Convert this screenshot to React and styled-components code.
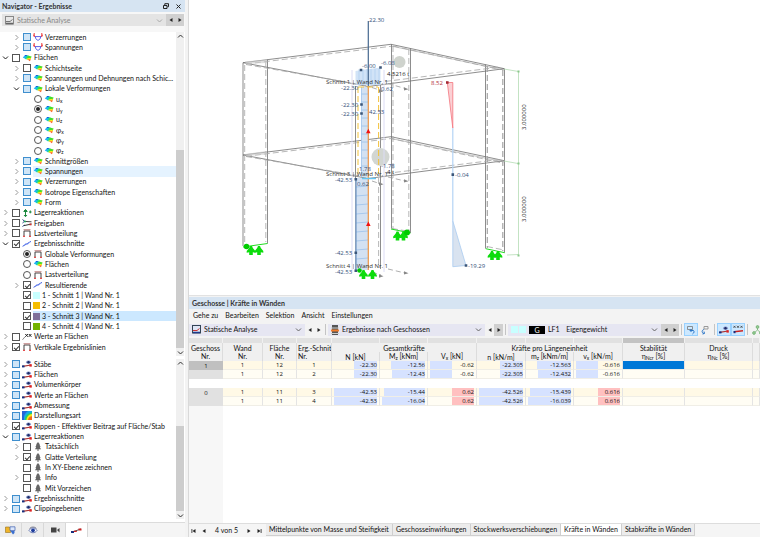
import React from 'react'
import styled, { createGlobalStyle, css } from 'styled-components'

const GlobalStyle = createGlobalStyle`
  *, *::before, *::after {
    box-sizing: border-box;
  }

  body {
    margin: 0;
    background: #f3f3f3;
    color: #111;
    font: 7px/9px Lato, "Open Sans", sans-serif;
  }

  button, select, input {
    font: inherit;
    color: inherit;
    margin: 0;
    padding: 0;
    border: 0;
    border-radius: 0;
    background: none;
  }
`

const Window = styled.div`
  display: flex;
  min-height: 100vh;
`

/* ---------- navigator ---------- */

const Navigator = styled.aside`
  display: flex;
  flex-direction: column;
  flex: 0 0 185px;
  background: #fff;
`

const TitleBar = styled.header`
  display: flex;
  align-items: center;
  gap: 7px;
  height: 12px;
  padding: 0 4px 0 2px;
  background: #d6e4f2;

  h1 {
    flex: 1;
    margin: 0;
    font-size: 7px;
    font-weight: 700;
    color: #333;
  }
`

const PlainButton = styled.button`
  display: flex;
  align-items: center;
  justify-content: center;
`

const NavToolbar = styled.div`
  display: flex;
  align-items: center;
  height: 20px;
  padding: 1px 1px 5px 2px;
  background: #f7f7f7;
`

const Combo = styled.label`
  display: flex;
  align-items: center;
  gap: 3px;
  flex: ${p => p.$width ? `0 0 ${p.$width}px` : '1'};
  height: 12px;
  padding: 0 3px;
  background: ${p => p.$muted ? '#e4e4e4' : '#e6e6f2'};

  select {
    flex: 1;
    min-width: 0;
    appearance: none;
    outline: none;
    opacity: 1;
    color: ${p => p.$muted ? '#888' : 'inherit'};
  }
`

const StepButton = styled(PlainButton)`
  flex: none;
  width: 9px;
  height: 12px;
  background: ${p => p.$filled ? '#d0d0d0' : 'transparent'};
`

const Tree = styled.section`
  display: flex;
  flex: ${p => p.$rows} 0 ${p => p.$after}px;
`

const TreeRows = styled.ul`
  display: flex;
  flex-direction: column;
  flex: 1;
  min-width: 0;
  margin: 0;
  padding: 0 0 ${p => p.$after}px;
  list-style: none;
`

const TreeRow = styled.li`
  display: flex;
  align-items: center;
  flex: 1;
  padding-left: ${p => p.$level * 11}px;
`

const Twisty = styled(PlainButton)`
  width: 12px;
  height: 10px;
  padding-right: 1px;
`

const TwistySpace = styled.span`
  width: 12px;
`

const boxFill = css`
  border-color: #3f8fce;
  background: #cfe5f7;
`

const Check = styled.input`
  display: grid;
  place-items: center;
  appearance: none;
  width: 8px;
  height: 8px;
  margin-right: 2px;
  border: 1px solid #555;
  border-radius: ${p => p.type === 'radio' ? '50%' : '0'};
  background: #fff;
  ${p => p.$partial && boxFill}

  &:checked::after {
    content: '';
    ${p => p.type === 'radio' ? css`
      width: 4px;
      height: 4px;
      border-radius: 50%;
      background: #222;
    ` : css`
      width: 5px;
      height: 3px;
      border: solid #333;
      border-width: 0 0 1px 1px;
      transform: rotate(-48deg);
    `}
  }
`

const RowLabel = styled.label`
  display: flex;
  align-items: center;
  gap: 2px;
  flex: 1;
  min-width: 0;
  height: 100%;
  overflow: hidden;
  white-space: nowrap;
  background: ${p => p.$tone || 'transparent'};

  svg {
    flex: none;
  }

  sub {
    font-size: 5px;
    line-height: 1;
    vertical-align: -1px;
  }
`

const Swatch = styled.span`
  width: 7px;
  height: 7px;
  background: ${p => p.$color};
`

const Scroll = styled.div`
  display: flex;
  flex-direction: column;
  width: 8px;
  margin: 0 1px 3px 0;
  background: #f0f0f0;
`

const ScrollButton = styled(PlainButton)`
  height: 8px;
`

const Before = styled.span`
  flex: ${p => p.$part};
`

const Thumb = styled.span`
  flex: ${p => p.$part};
  background: #cdcdcd;
`

const NavTabs = styled.nav`
  display: flex;
  height: 15px;
  background: #f5f5f5;
  border-top: 1px solid #dcdcdc;
`

const NavTab = styled(PlainButton)`
  width: 22px;
  border-right: 1px solid #d8d8d8;
  background: ${p => p.$active ? '#fff' : '#ededed'};
`

/* ---------- right side ---------- */

const Main = styled.main`
  display: flex;
  flex-direction: column;
  flex: 1;
  min-width: 0;
  margin-left: 3px;
  border-left: 1px solid #d9d9d9;
`

const Viewport = styled.div`
  flex: none;
  background: #fff;
  border-bottom: 1px solid #e2e2e2;

  svg {
    display: block;
    width: 100%;
  }
`

const Panel = styled.section`
  display: flex;
  flex-direction: column;
  flex: 1;
  margin-top: 1px;
`

const PanelTitle = styled.h2`
  height: 12px;
  margin: 0;
  padding: 0 3px;
  background: #d6e4f2;
  font-size: 7px;
  font-weight: 700;
  line-height: 12px;
  color: #333;
`

const MenuBar = styled.nav`
  display: flex;
  align-items: center;
  gap: 7px;
  height: 13px;
  padding: 0 4px;
`

const Toolbar = styled.div`
  display: flex;
  align-items: center;
  height: 15px;
  margin-bottom: 1px;
  overflow: hidden;
`

const Divider = styled.span`
  flex: none;
  width: 1px;
  height: 11px;
  margin: 0 2px;
  background: #c4c4c4;
`

const ToolButton = styled(PlainButton)`
  flex: none;
  width: 14px;
  height: 13px;
  border: 1px solid ${p => p.$on ? '#99d1ff' : 'transparent'};
  background: ${p => p.$on ? '#cce8ff' : 'transparent'};
`

const CaseTag = styled.span`
  width: 16px;
  background: #000;
  color: #fff;
  line-height: 8px;
  text-align: center;
`

const CaseColors = styled.span`
  display: flex;
  gap: 1px;
`

const TableArea = styled.div`
  flex: 1;
  background: linear-gradient(90deg, #f7f7f7 34px, #fff 34px);
`

const Table = styled.table`
  width: 100%;
  table-layout: fixed;
  border-collapse: separate;
  border-spacing: 0;

  th, td {
    height: 9px;
    padding: 0 2px;
    border-right: 1px solid #e4e4e4;
    font-weight: 400;
    line-height: 8px;
    text-align: center;
    white-space: nowrap;
    overflow: hidden;
  }

  td {
    font: 6px/8px "Open Sans", "Noto Sans", sans-serif;
  }

  thead th {
    background: #f0f0f0;
    border-right-color: #dcdcdc;
  }

  sub {
    font-size: 5px;
    line-height: 1;
    vertical-align: -1px;
  }
`

const StartHead = styled.th`
  && {
    text-align: left;
    padding: 0 0 0 1px;
  }
`

const Grip = styled.td`
  && {
    height: 5px;
    line-height: 5px;
    background: ${p => p.$on ? '#c3c3c3' : '#e1e1e1'};
    border-right: 1px solid #f0f0f0;
  }
`

const StoreyCell = styled.th`
  && {
    background: ${p => p.$on ? '#c0c0c0' : '#e1e1e1'};
    border-right: 0;
    font: 6px/8px "Open Sans", "Noto Sans", sans-serif;
  }
`

const DataRow = styled.tr`
  td {
    background: ${p => p.$soft ? '#fffdf4' : '#fff9e6'};
    border-bottom: 1px solid #f0eee6;
  }
`

const GapRow = styled.tr`
  td {
    border: 0;
    background: #fff;
  }
`

const SelectedCell = styled.td`
  && {
    background: #0078d7;
  }
`

const Meter = styled.span`
  display: grid;
  height: 8px;

  > * {
    grid-area: 1 / 1;
    line-height: 8px;
    text-align: right;
  }
`

const MeterBar = styled.span`
  margin-left: ${p => p.$from}%;
  width: ${p => p.$size}%;
  background: ${p => p.$positive ? '#ffc0c0' : '#d6e2ff'};
`

const SheetBar = styled.footer`
  display: flex;
  height: 14px;
  background: #f5f5f5;
  border-top: 1px solid #ddd;
`

const Pager = styled.div`
  display: flex;
  align-items: center;
  gap: 4px;
  width: 77px;
  padding: 0 4px 0 2px;

  span {
    flex: 1;
    text-align: center;
    white-space: nowrap;
  }
`

const SheetTab = styled(PlainButton)`
  height: 12px;
  padding: 0 3px;
  border-right: 1px solid #cfcfcf;
  border-bottom: 1px solid #cfcfcf;
  background: ${p => p.$active ? '#fff' : '#ececec'};
  white-space: nowrap;
`

/* ---------- icons ---------- */

const Chevron = ({ dir = 'down', color = '#666' }) => {
  const d = {
    down: 'M1 2.5 3.5 5 6 2.5',
    up: 'M1 4.5 3.5 2 6 4.5',
    right: 'M2.5 1 5 3.5 2.5 6'
  }[dir]
  return (
    <svg width="7" height="7" viewBox="0 0 7 7" fill="none" stroke={color} strokeWidth="1">
      <path d={d} />
    </svg>
  )
}

const Arrow = ({ dir, bar }) => (
  <svg width="6" height="6" viewBox="0 0 6 6" fill="#222">
    <g transform={dir === 'left' ? 'translate(6 0) scale(-1 1)' : undefined}>
      <path d="M1.500 1v4l3-2z" />
      {bar && <path d="M4.700 1h.8v4h-.8z" />}
    </g>
  </svg>
)

const RainbowIcon = () => (
  <svg width="10" height="8" viewBox="0 0 10 8">
    <path d="M.8 3.600 3.200 1 5.600 1.600 4 5.200z" fill="#1fb4f5" />
    <path d="M2.600 1.800 3.400.9 5.400 1.300 5 2.600z" fill="#1450e0" />
    <path d="M4.400 1.700 6.400 1.500 6 5.600 3 5z" fill="#17d9a0" />
    <path d="M5.800 1.600 9.600 2.600 8.600 5 5 4.800z" fill="#45dd2c" />
    <path d="M4.400 4.600 9 3.800 8.300 5.800 5 5.800z" fill="#ffe818" />
    <path d="M5.600 5.500 8.700 5.200 8 7.300z" fill="#fb5a1e" />
  </svg>
)

const CurveIcon = () => (
  <svg width="10" height="8" viewBox="0 0 10 8" fill="none">
    <path d="M1.200 0v4M8.800 0v4M0 1.800l2 1.600M10 1.800 8 3.400" stroke="#ee3a3a" />
    <path d="M2 3.600h6M2.200 3.600c.8 4.800 4.800 4.800 5.600 0" stroke="#5c5ce6" />
  </svg>
)

const FrameIcon = () => (
  <svg width="10" height="8" viewBox="0 0 10 8" fill="none">
    <path d="M2 7V2h6v5" stroke="#444" />
    <path d="M1.500.8h7" stroke="#b77" />
    <path d="M1 7.300h2M7 7.300h2" stroke="#d22" />
  </svg>
)

const SectionIcon = () => (
  <svg width="10" height="8" viewBox="0 0 10 8" fill="none">
    <path d="M.6 6.300 9 1.400" stroke="#3154e0" />
    <path d="M2 5.600 3.600 3.600 6 4.200 8 1.800" stroke="#8fa4f5" />
  </svg>
)

const SupportIcon = () => (
  <svg width="10" height="8" viewBox="0 0 10 8" fill="none" stroke="#1d8a3f">
    <path d="M3.500.5v7M1.500 2.500h4M2 6l1.500 1.700L5 6M2 2 3.500.5 5 2M7 3h2.600M8.300 1.500v2.800" />
  </svg>
)

const HingeIcon = () => (
  <svg width="10" height="8" viewBox="0 0 10 8" fill="none">
    <path d="M.5.500 2.500 2.200.5 4M.5 7.500 2.500 6" stroke="#27407f" />
    <path d="M2 2.400 9.500 2.800" stroke="#444" />
    <path d="M2 6.600 9.500 5" stroke="#333" />
    <path d="M7.500 4.500h2v1.800h-2z" fill="#c33" />
    <circle cx="3" cy="2.400" r="1" fill="#2a6" />
  </svg>
)

const ValuesIcon = () => (
  <svg width="10" height="8" viewBox="0 0 10 8" fill="none" stroke="#222">
    <path d="m3.300 1 2.600 2.800m0-2.800L3.300 3.800M6.800 1l2.600 2.800m0-2.800L6.800 3.800" />
    <path d="M.5 6.800 2.800 4" stroke="#888" />
  </svg>
)

const MemberIcon = () => (
  <svg width="10" height="8" viewBox="0 0 10 8">
    <path d="M.7 6.400 9 5" stroke="#a33" strokeWidth="1.200" />
    <rect x="0" y="5.400" width="2.500" height="2" fill="#15307f" />
    <rect x="7.400" y="4.200" width="2.400" height="2.400" fill="#d22" />
    <path d="M3.800 2.200C5 0 8 0 9.200 2.200 8 4.200 5 4.200 3.800 2.200z" fill="#8593c8" />
    <circle cx="6.500" cy="2.300" r="1.200" fill="#1b2a66" />
  </svg>
)

const ContourIcon = () => (
  <svg width="10" height="9" viewBox="0 0 10 9">
    <rect width="10" height="9" fill="#16a8e8" />
    <path d="M0 0h6A9 9 0 0 0 2 9H0z" fill="#2563d8" />
    <path d="M10 1.400A7.800 7.800 0 0 0 2.800 9H10z" fill="#27cf62" />
    <path d="M10 3A6 6 0 0 0 4.400 9H10z" fill="#f5e81b" />
    <path d="M10 5.200A4.400 4.400 0 0 0 6 9h4z" fill="#f4661c" />
  </svg>
)

const TreeIcon = () => (
  <svg width="10" height="9" viewBox="0 0 10 9" fill="#666">
    <path d="M5 0 7 2.600H6.400L7.600 5H6.800L8 7.200H5.500V9h-1V7.200H2L3.200 5h-.8l1.200-2.400H3z" />
  </svg>
)

const ResultIcon = ({ muted }) => (
  <svg width="9" height="9" viewBox="0 0 9 9" fill="none">
    <rect x=".5" y=".5" width="8" height="7.500" fill={muted ? '#e8e8e8' : '#dfe6f5'} stroke={muted ? '#888' : '#345'} />
    <path d="M1 5.500h4l2.500-2" stroke={muted ? '#777' : '#c33'} />
    <path d="M1 7.500h7" stroke={muted ? '#666' : '#1d3a8c'} strokeWidth="1.500" />
  </svg>
)

const StoreyIcon = () => (
  <svg width="8" height="10" viewBox="0 0 8 10">
    <rect x="1" y="0" width="6" height="10" fill="#555" />
    <path d="M0 3h8M0 8.500h8" stroke="#ccc" />
    <path d="M0 5.500h8" stroke="#ee7a2b" strokeWidth="2" />
  </svg>
)

const icons = {
  rainbow: RainbowIcon,
  curve: CurveIcon,
  frame: FrameIcon,
  section: SectionIcon,
  support: SupportIcon,
  hinge: HingeIcon,
  values: ValuesIcon,
  member: MemberIcon,
  contour: ContourIcon,
  tree: TreeIcon
}

/* ---------- data ---------- */

const symbol = (s, i) => <span>{s}<sub>{i}</sub></span>

// level, twisty ('>' closed, 'v' open), box, icon, text, highlight
const resultRows = [
  [1, '>', 'part', 'curve', 'Verzerrungen'],
  [1, '>', 'part', 'curve', 'Spannungen'],
  [0, 'v', 'off', 'rainbow', 'Flächen'],
  [1, '>', 'off', 'rainbow', 'Schichtseite'],
  [1, '>', 'part', 'rainbow', 'Spannungen und Dehnungen nach Schic...'],
  [1, 'v', 'part', 'rainbow', 'Lokale Verformungen'],
  [2, '', 'radio', 'rainbow', symbol('u', 'x')],
  [2, '', 'radioOn', 'rainbow', symbol('u', 'y')],
  [2, '', 'radio', 'rainbow', symbol('u', 'z')],
  [2, '', 'radio', 'rainbow', symbol('φ', 'x')],
  [2, '', 'radio', 'rainbow', symbol('φ', 'y')],
  [2, '', 'radio', 'rainbow', symbol('φ', 'z')],
  [1, '>', 'part', 'rainbow', 'Schnittgrößen'],
  [1, '>', 'part', 'rainbow', 'Spannungen', '#e5f3ff'],
  [1, '>', 'part', 'rainbow', 'Verzerrungen'],
  [1, '>', 'part', 'rainbow', 'Isotrope Eigenschaften'],
  [1, '>', 'part', 'rainbow', 'Form'],
  [0, '>', 'off', 'support', 'Lagerreaktionen'],
  [0, '>', 'off', 'hinge', 'Freigaben'],
  [0, '>', 'off', 'frame', 'Lastverteilung'],
  [0, 'v', 'on', 'section', 'Ergebnisschnitte'],
  [1, '', 'radioOn', 'frame', 'Globale Verformungen'],
  [1, '', 'radio', 'rainbow', 'Flächen'],
  [1, '', 'radio', 'frame', 'Lastverteilung'],
  [1, '>', 'on', 'section', 'Resultierende'],
  [1, '', 'on', '#c8ffff', '1 - Schnitt 1 | Wand Nr. 1'],
  [1, '', 'off', '#f5bd00', '2 - Schnitt 2 | Wand Nr. 1'],
  [1, '', 'on', '#80709a', '3 - Schnitt 3 | Wand Nr. 1', '#cce8ff'],
  [1, '', 'off', '#73b300', '4 - Schnitt 4 | Wand Nr. 1'],
  [0, '>', 'off', 'values', 'Werte an Flächen'],
  [0, '>', 'on', 'frame', 'Vertikale Ergebnislinien']
]

const displayRows = [
  [0, '>', 'part', 'member', 'Stäbe'],
  [0, '>', 'part', 'member', 'Flächen'],
  [0, '>', 'part', 'member', 'Volumenkörper'],
  [0, '>', 'part', 'member', 'Werte an Flächen'],
  [0, '>', 'part', 'member', 'Abmessung'],
  [0, '>', 'part', 'contour', 'Darstellungsart'],
  [0, '>', 'on', 'member', 'Rippen - Effektiver Beitrag auf Fläche/Stab'],
  [0, 'v', 'part', 'member', 'Lagerreaktionen'],
  [1, '>', 'off', 'tree', 'Tatsächlich'],
  [1, '>', 'on', 'tree', 'Glatte Verteilung'],
  [1, '', 'off', 'tree', 'In XY-Ebene zeichnen'],
  [1, '>', 'off', 'tree', 'Info'],
  [1, '', 'off', 'tree', 'Mit Vorzeichen'],
  [0, '>', 'part', 'member', 'Ergebnisschnitte'],
  [0, '>', 'part', 'member', 'Clippingebenen']
]

const columns = [34, 40, 34, 35, 48, 48, 49, 49, 48, 49, 62, 68, null]

// each value: text, bar start %, bar size %
const neg = [0, 50]
const pos = [50, 50]
const storeys = [
  ['1', '1', '12', '1', [['-22.30', 47, 53], ['-12.56', 22, 78], ['-0.62', ...neg], ['-22.305', 47, 53], ['-12.563', 22, 78], ['-0.616', ...neg]]],
  ['', '1', '12', '2', [['-22.30', 47, 53], ['-12.43', 23, 77], ['-0.62', ...neg], ['-22.305', 47, 53], ['-12.432', 23, 77], ['-0.616', ...neg]]],
  null,
  ['0', '1', '11', '3', [['-42.53', 0, 100], ['-15.44', 4, 96], ['0.62', ...pos], ['-42.526', 0, 100], ['-15.439', 4, 96], ['0.616', ...pos]]],
  ['', '1', '11', '4', [['-42.53', 0, 100], ['-16.04', 0, 100], ['0.62', ...pos], ['-42.526', 0, 100], ['-16.039', 0, 100], ['0.616', ...pos]]]
]

const sheets = [
  'Mittelpunkte von Masse und Steifigkeit',
  'Geschosseinwirkungen',
  'Stockwerksverschiebungen',
  'Kräfte in Wänden',
  'Stabkräfte in Wänden'
]

/* ---------- parts ---------- */

const TreeView = ({ name, rows, after, thumb }) => (
  <Tree $rows={rows.length} $after={after}>
    <TreeRows $after={after}>
      {rows.map(([level, twisty, box, icon, text, tone], i) => {
        const id = `${name}-${i}`
        const radio = box.startsWith('radio')
        const Icon = icons[icon]
        return (
          <TreeRow key={id} $level={level}>
            {twisty
              ? (
                <Twisty aria-label="Zweig">
                  <Chevron dir={twisty === 'v' ? 'down' : 'right'} color={twisty === 'v' ? '#222' : '#999'} />
                </Twisty>
              )
              : <TwistySpace />}
            <Check
              id={id}
              type={radio ? 'radio' : 'checkbox'}
              name={radio ? `${name}-group-${level}` : undefined}
              defaultChecked={box === 'on' || box === 'radioOn'}
              $partial={box === 'part'}
            />
            <RowLabel htmlFor={id} $tone={tone}>
              {Icon ? <Icon /> : <Swatch $color={icon} />}
              <span>{text}</span>
            </RowLabel>
          </TreeRow>
        )
      })}
    </TreeRows>
    <Scroll>
      <ScrollButton aria-label="Nach oben"><Chevron dir="up" color="#333" /></ScrollButton>
      <Before $part={thumb[0]} />
      <Thumb $part={thumb[1]} />
      <ScrollButton aria-label="Nach unten"><Chevron color="#333" /></ScrollButton>
    </Scroll>
  </Tree>
)

const Supports = ({ x, y, gap }) => (
  <g fill="#0cdc0c">
    {[x, x + gap].map(cx => (
      <path key={cx} transform={`translate(${cx} ${y})`} d="M-1 0h2l.8 2L4.300 5v1.800L1.800 6.200V9h-3.600V6.200L-4.300 6.800V5L-1.800 2z" />
    ))}
  </g>
)

const steps = (from, to, gap) => {
  const list = []
  for (let y = from; y < to; y += gap) list.push(y)
  return list
}

const SceneText = styled.text`
  font: 6px "Open Sans", "Noto Sans", sans-serif;
  fill: ${p => p.$fill || '#34507a'};
`

const Scene = () => (
  <svg viewBox="189 0 571 295" role="img" aria-label="Gebäudemodell">
    <g fill="none" stroke="#707070" strokeWidth=".8">
      <path d="M243 62.700 391 44.300 504.300 68.700 368 86.500z" />
      <path d="M243 155 391 136.700 504.300 160.700 368 178.500z" />
      <path d="M391 46 504 70M391 138.500 504 162" strokeWidth=".4" />
      <path d="M243 62.700V246M267.500 59.700V243.500" />
      <path d="M391.500 44.300V228.500M410.500 48.500V233" />
      <path d="M485.500 64.500V248.500M504.500 68.700V252.500" />
      <path d="M355.500 86V270M380.500 85V269" />
    </g>
    <g fill="none" stroke="#a5a5a5" strokeWidth=".8" strokeDasharray="6 3">
      <path d="M244.700 65V246M265.800 61V242M246 64 391 46.300M246 64.500 366 85.500" />
      <path d="M393 46V229M408.800 49V231M393 46 500 69.500M385 81.500 500 67" />
      <path d="M487.300 66V248M502.800 70V251" strokeWidth="1.200" />
      <path d="M246 156.300 391 138.500 500 162.500M386 173.500 500 159.500M246 156.500 366 177" />
      <path d="M378.600 178v90M357.300 178v90M392 228.500l18 3M487 246.500l17 3.500" />
    </g>
    <path d="M245 61.500 267 59.500V63L246 64zM245 154 267 151v3.500L246 156z" fill="#c9c9c9" opacity=".6" />
    <circle cx="399.500" cy="62" r="6" fill="#cfd3cd" />
    <circle cx="380.500" cy="157" r="9" fill="#d2d6d2" />

    {/* wall under analysis */}
    <path d="M352 70V272M384 70V272" stroke="#dcdcf5" fill="none" />
    <path d="M355.500 71 361 70 380.500 67.500V85h-25z" fill="#c6dcf5" opacity=".8" />
    <path d="M361.500 87H368v90h-6.500zM355.500 178H368v92h-12.500z" fill="#d3e1f2" />
    <g stroke="#9dc1ea" strokeWidth=".8">
      {steps(94, 176, 8).map(y => <path key={y} d={`M361.500 ${y}h6.500`} />)}
      {steps(187, 268, 9).map(y => <path key={y} d={`M356 ${y}l12-1`} />)}
      {steps(359, 381, 4).map(x => <path key={x} d={`M${x} 69v16`} strokeWidth=".5" />)}
      <path d="M361.500 87v90" />
    </g>
    <path d="M356 178v92" stroke="#5b87bd" />
    <path d="M368.300 21V86" stroke="#46688f" strokeWidth="1.200" />
    <path d="M368.300 86v184" stroke="#eb9443" strokeWidth="1.200" />
    <path d="M358 87V176M378.600 87V176M358 87h20" fill="none" stroke="#f3c23c" strokeDasharray="6 3" />
    <path d="M366 133.300h4.600l-2.300-4.600zM366 226h4.600l-2.300-4.600z" fill="#f01212" />
    <path d="M362 178.500h14" stroke="#66c4f0" strokeWidth="1.500" />
    <g fill="none" stroke="#999" strokeWidth=".8" strokeDasharray="5 3">
      <path d="M372 87.500l9 3M388 83.500l17 5M372 181l9 3M388 177l17 4M372 272l9 3M388 269l17 4" />
    </g>
    <path d="M379 89.300l4.500 2-4.500 1.500zM404 87.300l4.500 2-4.500 1.200zM379 182.300l4.500 2-4.500 1.500zM404 179.300l4.500 2-4.500 1.200zM379 274.300l4.500 2-4.500 1.500zM404 271.300l4.500 2-4.500 1.200z" fill="#888" />

    {/* supports */}
    <g stroke="#22dd22" fill="none">
      <path d="M243 247l24.500-3.500M391 229l19.500 4M485.700 248.700l19 4" />
    </g>
    <Supports x={251} y={246} gap={8} />
    <Supports x={363.5} y={270} gap={9} />
    <Supports x={397.5} y={231.5} gap={6} />
    <Supports x={492} y={251} gap={6} />
    <circle cx="246.500" cy="246.500" r="2.800" fill="#0c0" />
    <circle cx="407" cy="232.500" r="3" fill="#0c0" />
    <circle cx="359.500" cy="270.500" r="2.300" fill="#0c0" />

    {/* result diagram */}
    <path d="M447.300 82.500h5.500V128z" fill="#fbd0d4" stroke="#f4757e" strokeWidth=".8" />
    <path d="M452.800 128v93" stroke="#b5d4f5" strokeWidth="1.200" />
    <path d="M452.800 221 466 265.500 452.800 266.700z" fill="#d9e3f0" stroke="#a9cbf0" strokeWidth=".8" />

    {/* dimensions */}
    <path d="M504 69l14.500 2.500V255.500M504 161l14.500 2.600M507 255l11.500-.5" fill="none" stroke="#b4dcb4" strokeWidth=".8" />
    <path d="M517.500 70.500h2v2h-2zM517.500 162.600h2v2h-2zM517.500 254.500h2v2h-2z" fill="#8ac88a" />

    <g fill="#3b5679">
      <path d="M359.700 68.700h2.600v2.600h-2.600zM379.200 66.200h2.600v2.600h-2.600zM360.200 103.200h2.600v2.600h-2.600zM360.200 112.200h2.600v2.600h-2.600z" />
      <path d="M451.500 173.300h2.600v2.600h-2.600zM464.700 264.200h2.600v2.600h-2.600zM354.500 251.500h2.600v2.600h-2.600zM354.500 269.500h2.600v2.600h-2.600zM354.500 178h2.600v2.600h-2.600z" />
    </g>
    <path d="M446 81.200h2.600v2.600H446z" fill="#a32935" />

    <SceneText x="369" y="22">22.30</SceneText>
    <SceneText x="362" y="68">-6.00</SceneText>
    <SceneText x="381" y="65">-6.08</SceneText>
    <SceneText x="387" y="76" $fill="#222">4.5216 t</SceneText>
    <SceneText x="341" y="90">-22.30</SceneText>
    <SceneText x="381" y="91">0.62</SceneText>
    <SceneText x="341" y="107">-22.30</SceneText>
    <SceneText x="341" y="116">-22.30</SceneText>
    <SceneText x="369" y="114">42.53</SceneText>
    <SceneText x="359" y="171">1.78</SceneText>
    <SceneText x="381" y="168">-1.78</SceneText>
    <SceneText x="387" y="174" $fill="#222">4 t</SceneText>
    <SceneText x="335" y="182">-42.53</SceneText>
    <SceneText x="357" y="186">0.62</SceneText>
    <SceneText x="335" y="255">-42.53</SceneText>
    <SceneText x="335" y="274">-42.53</SceneText>
    <SceneText x="326" y="84" $fill="#333">Schnitt 1 | Wand Nr. 1</SceneText>
    <SceneText x="326" y="176" $fill="#333">Schnitt 3 | Wand Nr. 1</SceneText>
    <SceneText x="326" y="268" $fill="#333">Schnitt 4 | Wand Nr. 1</SceneText>
    <SceneText x="431" y="85" $fill="#b5303c">8.52</SceneText>
    <SceneText x="455" y="177">-0.04</SceneText>
    <SceneText x="468" y="268">-19.29</SceneText>
    <SceneText transform="translate(526 130) rotate(-90)" $fill="#222">3.000000</SceneText>
    <SceneText transform="translate(526 222) rotate(-90)" $fill="#222">3.000000</SceneText>
  </svg>
)

const ResultTable = () => (
  <Table>
    <colgroup>
      {columns.map((w, i) => <col key={i} width={w || undefined} />)}
    </colgroup>
    <thead>
      <tr>{columns.map((w, i) => <Grip key={i} $on={i === 10} />)}</tr>
      <tr>
        <th rowSpan="2">Geschoss<br />Nr.</th>
        <th rowSpan="2">Wand<br />Nr.</th>
        <th rowSpan="2">Fläche<br />Nr.</th>
        <StartHead rowSpan="2">Erg.-Schnitt<br />Nr.</StartHead>
        <th colSpan="3">Gesamtkräfte</th>
        <th colSpan="3">Kräfte pro Längeneinheit</th>
        <th>Stabilität</th>
        <th>Druck</th>
        <th />
      </tr>
      <tr>
        <th>N [kN]</th>
        <th>M<sub>z</sub> [kNm]</th>
        <th>V<sub>x</sub> [kN]</th>
        <th>n [kN/m]</th>
        <th>m<sub>z</sub> [kNm/m]</th>
        <th>v<sub>x</sub> [kN/m]</th>
        <th>η<sub>Ncr</sub> [%]</th>
        <th>η<sub>Nc</sub> [%]</th>
        <th />
      </tr>
    </thead>
    <tbody>
      {storeys.map((row, i) => {
        if (!row) return <GapRow key={i}><td colSpan="13" /></GapRow>
        const [storey, wall, surface, cut, values] = row
        return (
          <DataRow key={i} $soft={!storey}>
            <StoreyCell $on={i === 0}>{storey}</StoreyCell>
            <td>{wall}</td>
            <td>{surface}</td>
            <td>{cut}</td>
            {values.map(([text, from, size], n) => (
              <td key={n}>
                <Meter>
                  <MeterBar $from={from} $size={size} $positive={!text.startsWith('-')} />
                  <span>{text}</span>
                </Meter>
              </td>
            ))}
            {i === 0 ? <SelectedCell /> : <td />}
            <td />
            <td />
          </DataRow>
        )
      })}
    </tbody>
  </Table>
)

export default function App() {
  return (
    <Window>
      <GlobalStyle />
      <Navigator>
        <TitleBar>
          <h1>Navigator - Ergebnisse</h1>
          <PlainButton aria-label="Lösen">
            <svg width="6" height="6" viewBox="0 0 6 6" fill="none" stroke="#222">
              <path d="M.5 2.500h3.500v3H.5zM1.800 2V.7h3.700v3H4.500" />
            </svg>
          </PlainButton>
          <PlainButton aria-label="Schließen">
            <svg width="5" height="5" viewBox="0 0 5 5" stroke="#222"><path d="m.5.5 4 4m0-4-4 4" /></svg>
          </PlainButton>
        </TitleBar>
        <NavToolbar>
          <Combo $muted>
            <ResultIcon muted />
            <select aria-label="Analyse" disabled><option>Statische Analyse</option></select>
            <Chevron color="#aaa" />
          </Combo>
          <StepButton $filled aria-label="Zurück"><Arrow dir="left" /></StepButton>
          <StepButton $filled aria-label="Weiter"><Arrow /></StepButton>
        </NavToolbar>
        <TreeView name="result" rows={resultRows} after={7} thumb={[110, 197]} />
        <TreeView name="display" rows={displayRows} after={8} thumb={[59, 85]} />
        <NavTabs>
          <NavTab aria-label="Daten">
            <svg width="11" height="9" viewBox="0 0 11 9">
              <path d="M.5 1h4l1 1v4.500h-5z" fill="#f0b428" stroke="#94701c" strokeWidth=".6" />
              <path d="M5 .8h5v3.700H5z" fill="#dbe6fa" stroke="#3c5fb0" strokeWidth=".7" />
              <path d="M5.500 5h4v2l-1.500 1.500z" fill="#3a6fd0" />
            </svg>
          </NavTab>
          <NavTab aria-label="Zeigen">
            <svg width="10" height="8" viewBox="0 0 10 8">
              <path d="M1 4.500C3 1 7 1 9 4.500 7 7.500 3 7.500 1 4.500z" fill="#fff" stroke="#31499a" strokeWidth=".7" />
              <circle cx="5" cy="4.300" r="1.900" fill="#1d3c9c" />
              <path d="M1.500 2.500C3 .5 7 .5 8.500 2.500" fill="none" stroke="#667" strokeWidth=".7" />
            </svg>
          </NavTab>
          <NavTab aria-label="Ansichten">
            <svg width="10" height="8" viewBox="0 0 10 8" fill="#444">
              <rect x="1" y="1.500" width="5.500" height="5" /><path d="m7 4 2.500-2v4.500z" />
            </svg>
          </NavTab>
          <NavTab $active aria-label="Ergebnisse">
            <svg width="11" height="8" viewBox="0 0 11 8">
              <path d="M1 6 10 3" stroke="#555" />
              <rect x="0" y="5" width="3" height="2" fill="#15307f" />
              <path d="M2.800 4.800h3V6h-3zM7.500 2.500h3v2h-3z" fill="#c22" />
            </svg>
          </NavTab>
        </NavTabs>
      </Navigator>

      <Main>
        <Viewport><Scene /></Viewport>
        <Panel>
          <PanelTitle>Geschosse | Kräfte in Wänden</PanelTitle>
          <MenuBar>
            {['Gehe zu', 'Bearbeiten', 'Selektion', 'Ansicht', 'Einstellungen'].map(item => (
              <PlainButton key={item}>{item}</PlainButton>
            ))}
          </MenuBar>
          <Toolbar>
            <Combo $width={116}>
              <ResultIcon />
              <select aria-label="Analyse"><option>Statische Analyse</option></select>
              <Chevron />
            </Combo>
            <StepButton aria-label="Vorherige Analyse"><Arrow dir="left" /></StepButton>
            <StepButton aria-label="Nächste Analyse"><Arrow /></StepButton>
            <Divider />
            <Combo $width={157}>
              <StoreyIcon />
              <select aria-label="Tabelle"><option>Ergebnisse nach Geschossen</option></select>
              <Chevron />
            </Combo>
            <StepButton aria-label="Vorherige Tabelle"><Arrow dir="left" /></StepButton>
            <StepButton $filled aria-label="Nächste Tabelle"><Arrow /></StepButton>
            <Divider />
            <Combo $width={153}>
              <CaseColors><Swatch $color="#c8ffff" /><Swatch $color="#c8ffff" /></CaseColors>
              <CaseTag>G</CaseTag>
              <span>LF1</span>
              <select aria-label="Lastfall"><option>&nbsp;&nbsp;Eigengewicht</option></select>
              <Chevron />
            </Combo>
            <StepButton $filled aria-label="Vorheriger Lastfall"><Arrow dir="left" /></StepButton>
            <StepButton $filled aria-label="Nächster Lastfall"><Arrow /></StepButton>
            <Divider />
            <ToolButton $on aria-label="Auswahl übernehmen">
              <svg width="10" height="10" viewBox="0 0 10 10" fill="none">
                <path d="M1.500 1.500h5v3h-5z" stroke="#777" strokeWidth=".8" />
                <path d="M4 5.500h3.500c1 1 .5 2.500-1 3.500M5.500 4 4 5.500 5.500 7" stroke="#2b76c8" />
              </svg>
            </ToolButton>
            <ToolButton aria-label="Auswahl lösen">
              <svg width="10" height="10" viewBox="0 0 10 10" fill="none">
                <path d="M4 1.500h4v2.500H4z" stroke="#999" />
                <path d="M4 4.500C1.500 5 1.500 8 4 8.500M2.500 9 4.500 8.500 4 6.500" stroke="#2b76c8" />
              </svg>
            </ToolButton>
            <Divider />
            <ToolButton $on aria-label="Ergebnisse zeigen"><MemberIcon /></ToolButton>
            <ToolButton $on aria-label="Werte zeigen">
              <svg width="11" height="9" viewBox="0 0 11 9" fill="none">
                <path d="m.5.800 2 2m0-2-2 2m3.500-2 2 2m0-2-2 2m3.500-2 2 2m0-2-2 2" stroke="#333" strokeWidth=".8" />
                <path d="M1 6.800 10 5.800" stroke="#c22" strokeWidth="1.500" />
                <path d="M.5 6h2v2.200h-2z" fill="#15307f" />
              </svg>
            </ToolButton>
            <Divider />
            <ToolButton aria-label="Beziehungen">
              <svg width="11" height="10" viewBox="0 0 11 10" fill="#9c9" stroke="#6a6" strokeWidth=".7">
                <path d="M5.500 2v3L2 8M5.500 5 9 8" fill="none" />
                <circle cx="5.500" cy="2" r="1.400" /><circle cx="2" cy="8" r="1.400" /><circle cx="9" cy="8" r="1.400" />
              </svg>
            </ToolButton>
          </Toolbar>
          <TableArea><ResultTable /></TableArea>
          <SheetBar>
            <Pager>
              <PlainButton aria-label="Erste"><Arrow dir="left" bar /></PlainButton>
              <PlainButton aria-label="Vorige"><Arrow dir="left" /></PlainButton>
              <span>4 von 5</span>
              <PlainButton aria-label="Nächste"><Arrow /></PlainButton>
              <PlainButton aria-label="Letzte"><Arrow bar /></PlainButton>
            </Pager>
            {sheets.map(s => (
              <SheetTab key={s} $active={s === 'Kräfte in Wänden'}>{s}</SheetTab>
            ))}
          </SheetBar>
        </Panel>
      </Main>
    </Window>
  )
}
